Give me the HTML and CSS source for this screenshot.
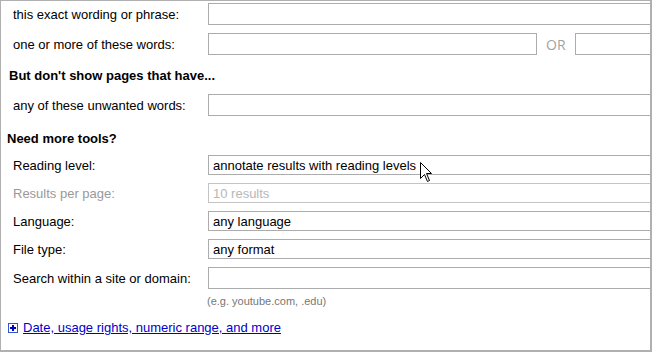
FILE: index.html
```html
<html>
<head>
	<link rel="stylesheet" href="styles.css">
</head>
<body>
	<div id="panel">
		<div class="row first">
			<label>this exact wording or phrase:</label>
			<input class="field" type="text"/>
		</div>
		<div class="row">
			<label>one or more of these words:</label>
			<input class="field short" type="text"/>
			<span class="or">OR</span>
			<input class="field" type="text"/>
		</div>

		<div class="heading">But don't show pages that have...</div>
		<div class="row">
			<label>any of these unwanted words:</label>
			<input class="field" type="text"/>
		</div>

		<div class="heading tools">Need more tools?</div>
		<div class="row pick first-pick">
			<label>Reading level:</label>
			<select class="choice"><option>annotate results with reading levels</option></select>
		</div>
		<div class="row pick off">
			<label>Results per page:</label>
			<select class="choice" disabled><option>10 results</option></select>
		</div>
		<div class="row pick">
			<label>Language:</label>
			<select class="choice"><option>any language</option></select>
		</div>
		<div class="row pick">
			<label>File type:</label>
			<select class="choice"><option>any format</option></select>
		</div>
		<div class="row site">
			<label>Search within a site or domain:</label>
			<input class="field" type="text"/>
		</div>
		<div class="hint">(e.g. youtube.com, .edu)</div>

		<div class="more">
			<svg class="plus" width="10" height="10" viewBox="0 0 10 10">
				<rect x="0.5" y="0.5" width="9" height="9" fill="#fff" stroke="#3355cc"/>
				<rect x="2" y="4" width="6" height="2" fill="#0000cc"/>
				<rect x="4" y="2" width="2" height="6" fill="#0000cc"/>
			</svg>
			<a href="#">Date, usage rights, numeric range, and more</a>
		</div>

		<svg class="cursor" width="13" height="21" viewBox="0 0 13 21">
			<polygon points="0.5,0.5 0.5,16.5 4.5,12.5 7.5,19.5 9.5,18.5 6.5,11.5 11.5,11.5" fill="#fff" stroke="#000" stroke-width="1" stroke-linejoin="miter"/>
		</svg>
	</div>
</body>
</html>
```

FILE: styles.css
```css
body{
	margin:0;
	font-family: "Liberation Sans", Arial, sans-serif;
	font-size:13px;
	color:#000;
}

#panel {
	position: relative;
	box-sizing: border-box;
	width: 652px;
	height: 352px;
	border-top: 1px solid #b0b0b0;
	border-left: 1px solid #b0b0b0;
	border-right: 2px solid #b0b0b0;
	border-bottom: 2px solid #b0b0b0;
	overflow: hidden;
	background: #fff;
}

.row{
	display: flex;
	align-items: center;
	height: 22px;
	margin-top: 8px;
}
.row.first{
	margin-top: 2px;
}
.row > label{
	flex: none;
	width: 195px;
	padding-left: 12px;
}

.field{
	flex: 1;
	box-sizing: border-box;
	height: 22px;
	margin: 0 -12px 0 0;
	border: 1px solid #acacac;
	background: #fff;
	outline: none;
}
.field.short{
	flex: none;
	width: 329px;
	margin-right: 0;
}
.or{
	flex: none;
	width: 38px;
	padding-left: 9px;
	box-sizing: border-box;
	font-family: "Open Sans", sans-serif;
	font-size: 14px;
	color: #a3a3a3;
}

.heading{
	height: 16px;
	line-height: 16px;
	margin-top: 13px;
	padding-left: 8px;
	font-weight: bold;
}
.heading.tools{
	margin-top: 15px;
	padding-left: 6px;
}
.heading + .row{
	margin-top: 10px;
}

.row.pick{
	height: 20px;
}
.heading + .row.pick{
	margin-top: 8px;
}
.choice{
	flex: 1;
	-webkit-appearance: none;
	appearance: none;
	box-sizing: border-box;
	height: 20px;
	margin-right: -12px;
	padding: 0 0 0 4px;
	border: 1px solid #acacac;
	border-radius: 0;
	background: #fff;
	font-family: "Liberation Sans", Arial, sans-serif;
	font-size: 13px;
	color: #000;
}
.off > label,
.off .choice{
	color: #999;
}

.hint{
	margin-top: 6px;
	padding-left: 206px;
	font-size: 11px;
	line-height: 13px;
	color: #777;
}

.more{
	display: flex;
	align-items: center;
	gap: 5px;
	margin-top: 12px;
	padding-left: 7px;
	line-height: 16px;
}
.more a{
	color: #0000cc;
	text-decoration: underline;
}

.cursor{
	position: absolute;
	left: 419px;
	top: 161px;
}
```
